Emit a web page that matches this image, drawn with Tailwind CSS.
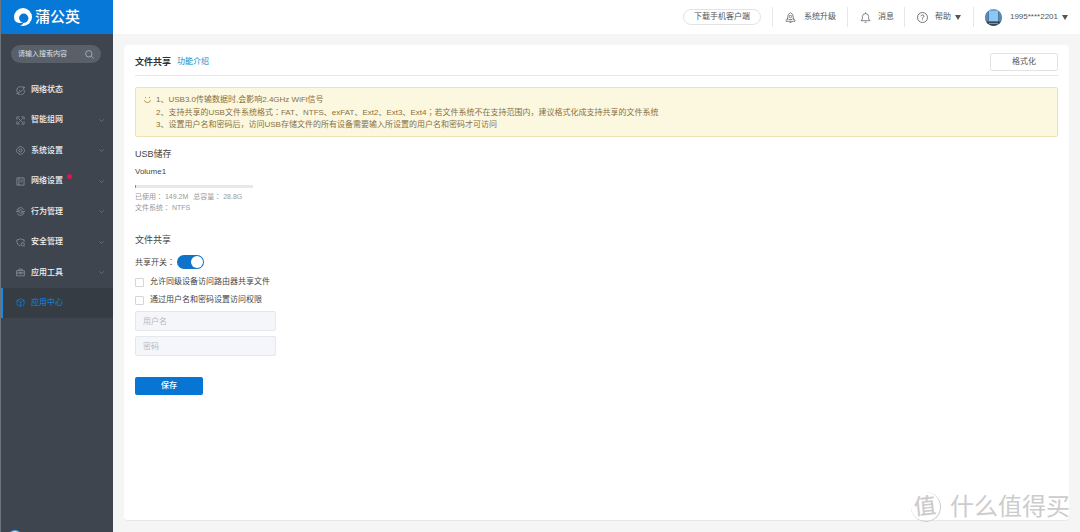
<!DOCTYPE html>
<html lang="zh-CN">
<head>
<meta charset="utf-8">
<meta name="viewport" content="width=device-width, initial-scale=1">
<title>蒲公英 - 文件共享</title>
<script src="https://cdn.jsdelivr.net/npm/@tailwindcss/browser@4"></script>
</head>
<body class="flex h-screen overflow-hidden bg-[#f5f5f5] font-['Liberation_Sans','Noto_Sans_CJK_SC',sans-serif] text-[8px] leading-3 text-[#555]">

<aside class="relative flex w-[113px] shrink-0 flex-col overflow-hidden border-l border-[#6d747c] bg-[#3e454e]">
  <a href="#" class="-ml-px flex h-[34px] shrink-0 items-center gap-[3px] bg-[#0578d8] pl-[14px] text-[15px] leading-5 font-medium text-white">
    <svg class="size-[18px]" viewBox="0 0 18 18"><circle cx="9" cy="9" r="9" fill="#fff"/><circle cx="9.700" cy="10.300" r="4.700" fill="#0578d8"/><path d="M0 12.500Q2.500 15.500 7 14.600L9.500 15Q8.500 17 5 18H0Z" fill="#0578d8"/><path d="M.5 11.500Q3 15.200 8.500 14.900Q5.300 13.800 5 10L2 8Z" fill="#fff"/></svg>
    <span>蒲公英</span>
  </a>
  <form class="mt-[11px] ml-[10px] flex h-[18px] w-[90px] shrink-0 items-center rounded-full bg-[#59606a] pr-[7px] pl-[7px]">
    <input type="search" aria-label="搜索" placeholder="请输入搜索内容" class="w-0 flex-1 bg-transparent text-[7px] text-white outline-none placeholder:text-[#dde0e3]">
    <button type="button" aria-label="搜索"><svg class="size-[9px]" viewBox="0 0 9 9" fill="none" stroke="#b4b9be" stroke-width=".8"><circle cx="3.800" cy="3.800" r="3.200"/><path d="M6.200 6.200L8.500 8.500"/></svg></button>
  </form>
  <nav class="mt-3 flex h-[243px] shrink-0 flex-col justify-between font-medium text-[#f0f1f2] [&_a]:flex [&_a]:h-[30px] [&_a]:items-center [&_a]:gap-[6px] [&_a]:pr-[9px] [&_a]:pl-[15px] [&_.i]:size-[9px] [&_.i]:fill-none [&_.i]:stroke-[#959ba2] [&_.c]:ml-auto [&_.c]:h-[3px] [&_.c]:w-[5px] [&_.c]:fill-none [&_.c]:stroke-[#757c84]">
    <a href="#"><svg class="i" viewBox="0 0 10 10" stroke-width=".8"><path d="M1 3.500A4.200 4.200 0 0 1 7 1.300M9 4A4.200 4.200 0 0 1 1.200 7.500M.5 8.500C3 8.500 8 4.500 9.300 1.200M1 3.500Q.2 7 3 7.500M3.500 4.500L5 6"/><circle cx="8.500" cy="1.500" r=".8"/></svg><span>网络状态</span></a>
    <a href="#"><svg class="i" viewBox="0 0 10 10" stroke-width=".8"><path d="M1 4V1H4M6 1H9V4M9 6V9H6M4 9H1V6M2.500 2.500L7.500 7.500M7.500 2.500L5.800 4.200M4.200 5.800L2.500 7.500"/></svg><span>智能组网</span><svg class="c" viewBox="0 0 5 3" stroke-width=".7"><path d="M.3.3L2.500 2.500L4.700.3"/></svg></a>
    <a href="#"><svg class="i" viewBox="0 0 10 10" stroke-width=".8"><path d="M3.200 1.200Q5 .2 6.800 1.200L8.300 2.500Q9.500 4 9.400 5Q9.500 6.500 8.300 7.500L6.800 8.800Q5 9.800 3.200 8.800L1.700 7.500Q.5 6.500.6 5Q.5 4 1.700 2.500Z"/><circle cx="5" cy="5" r="1.700"/></svg><span>系统设置</span><svg class="c" viewBox="0 0 5 3" stroke-width=".7"><path d="M.3.3L2.500 2.500L4.700.3"/></svg></a>
    <a href="#"><svg class="i" viewBox="0 0 10 10" stroke-width=".8"><path d="M1 1H9V9H1ZM3.300 1V9M5 3.500H7.500M5 5.500H7.500"/></svg><span class="relative">网络设置<i class="absolute -top-px -right-[9px] size-[5px] rounded-full bg-[#e3124d]"></i></span><svg class="c" viewBox="0 0 5 3" stroke-width=".7"><path d="M.3.3L2.500 2.500L4.700.3"/></svg></a>
    <a href="#"><svg class="i" viewBox="0 0 10 10" stroke-width=".8"><path d="M1.200 3A4.300 4.300 0 0 1 8.800 3M8.800 7A4.300 4.300 0 0 1 1.200 7M0 5H3M7 5H10M1 3.300H3.500M6.500 6.700H9"/><circle cx="5" cy="5" r="1.800"/></svg><span>行为管理</span><svg class="c" viewBox="0 0 5 3" stroke-width=".7"><path d="M.3.3L2.500 2.500L4.700.3"/></svg></a>
    <a href="#"><svg class="i" viewBox="0 0 10 10" stroke-width=".8"><path d="M5 9Q1 7.500 1 4.500V2Q3.500 2 5 .8Q6.500 2 9 2V4.500"/><circle cx="7.500" cy="7" r="1.800"/><path d="M8.800 8.300L9.700 9.200"/></svg><span>安全管理</span><svg class="c" viewBox="0 0 5 3" stroke-width=".7"><path d="M.3.3L2.500 2.500L4.700.3"/></svg></a>
    <a href="#"><svg class="i" viewBox="0 0 10 10" stroke-width=".8"><path d="M.7 3H9.300V8.700H.7ZM3.200 3V1.300H6.800V3M.7 5.500H4M6 5.500H9.300M4 4.800H6V6.300H4Z"/></svg><span>应用工具</span><svg class="c" viewBox="0 0 5 3" stroke-width=".7"><path d="M.3.3L2.500 2.500L4.700.3"/></svg></a>
    <a href="#" aria-current="page" class="-ml-px border-l-3 border-[#1989e6] bg-[#363c44] pl-[13px]! text-[#1678cc]"><svg class="i stroke-[#1678cc]!" viewBox="0 0 10 10" stroke-width=".9"><path d="M5 .8L9 2.600V7.200L5 9.300L1 7.200V2.600ZM1 2.600L5 4.600L9 2.600M5 4.600V9.300"/></svg><span>应用中心</span></a>
  </nav>
  <div class="absolute -bottom-[14px] left-[6px] size-4 rounded-full border border-[#3f98dc] bg-[#d4e5ef]"></div>
</aside>

<div class="flex min-w-0 flex-1 flex-col">
  <header class="flex h-[34px] shrink-0 items-center justify-end bg-white pr-3">
    <button class="mr-[11px] h-4 w-[78px] rounded-full border border-[#e3e3e3]">下载手机客户端</button>
    <a href="#" class="flex h-5 items-center gap-2 border-l border-[#e6e6e6] pr-[11px] pl-3"><svg class="size-[11px]" viewBox="0 0 11 11" fill="none" stroke="#666" stroke-width=".8"><path d="M2.800 8V4.200Q3 1.800 5.500.7Q8 1.800 8.200 4.200V8M2.800 6L1 8.500V9.300H10V8.500L8.200 6M4 7.500H7M4.500 10.400H6.500"/><circle cx="5.500" cy="4.500" r="1.200"/></svg>系统升级</a>
    <a href="#" class="flex h-5 items-center gap-[7px] border-l border-[#e6e6e6] pr-[10px] pl-3"><svg class="size-[11px]" viewBox="0 0 11 11" fill="none" stroke="#666" stroke-width=".8"><path d="M1 8.700H10L8.600 7V4.500Q8.400 1.700 5.500 1.500Q2.600 1.700 2.400 4.500V7ZM5.500.4V1.500M4.500 10.300H6.500"/></svg>消息</a>
    <button class="flex h-5 items-center gap-[7px] border-l border-[#e6e6e6] pr-3 pl-3"><svg class="size-[11px]" viewBox="0 0 11 11" fill="none" stroke="#555" stroke-width=".8"><circle cx="5.500" cy="5.500" r="5"/><path d="M4 4.300Q4.100 2.900 5.500 2.900Q7 3 7 4.300Q6.900 5.100 5.500 5.800V6.700M5.500 7.500V8.300"/></svg><span>帮助</span><svg class="-ml-[3px] h-[5px] w-[6px]" viewBox="0 0 6 5"><path d="M0 0H6L3 5Z" fill="#555"/></svg></button>
    <button class="flex h-5 items-center border-l border-[#e6e6e6] pl-[11px]"><svg class="mr-2 size-[17px]" viewBox="0 0 17 17"><defs><clipPath id="avatar"><circle cx="8.500" cy="8.500" r="8.500"/></clipPath></defs><g clip-path="url(#avatar)"><path d="M0 0H17V17H0Z" fill="#6ba4d2"/><path d="M4 2H13V12H4Z" fill="#8cc7f1"/><path d="M0 3H3V13H0ZM14 3H17V13H14Z" fill="#5888b4"/><path d="M3.500 2V13M13.500 2V13" stroke="#4a6f90" stroke-width=".8"/><path d="M1 12.500H16V17H1Z" fill="#354756"/><path d="M4 14.500H13" stroke="#8296a3"/></g></svg><span>1995****2201</span><svg class="ml-[4px] h-[5px] w-[6px]" viewBox="0 0 6 5"><path d="M0 0H6L3 5Z" fill="#555"/></svg></button>
  </header>

  <main class="m-[11px] flex-1 rounded-sm border-b border-[#e8e8e8] bg-white px-[11px]">
    <div class="flex h-[31px] items-center gap-[6px] border-b border-[#e6e6e6] pt-[3px]">
      <h1 class="text-[9px] font-bold text-[#333]">文件共享</h1>
      <a href="#" class="text-[#1a7fb8]">功能介绍</a>
      <button class="ml-auto h-[18px] w-[68px] rounded-xs border border-[#e3e3e3]">格式化</button>
    </div>

    <div class="mt-[11px] flex h-[50px] items-center gap-[5px] rounded-xs border border-[#eee3b0] bg-[#fcf8e0] px-2 text-[#89703f]">
      <svg class="mb-6 h-2 w-[7px]" viewBox="0 0 7 8" fill="none" stroke="#a98f4c" stroke-width=".9"><path d="M1.500 1V2.200M5.500 1V2.200M.5 4.200Q.7 6.500 3.500 6.500Q6.300 6.500 6.500 4.200"/></svg>
      <div>
        <p>1、USB3.0传输数据时,会影响2.4GHz WiFi信号</p>
        <p>2、支持共享的USB文件系统格式<span class="font-['Noto_Sans_CJK_TC']" lang="zh-TW">：</span>FAT、NTFS、exFAT、Ext2、Ext3、Ext4<span class="font-['Noto_Sans_CJK_TC']" lang="zh-TW">；</span>若文件系统不在支持范围内，建议格式化成支持共享的文件系统</p>
        <p>3、设置用户名和密码后，访问USB存储文件的所有设备需要输入所设置的用户名和密码才可访问</p>
      </div>
    </div>

    <section class="mt-[11px]">
      <h2 class="text-[9px] text-[#444]">USB储存</h2>
      <p class="mt-[6px] text-[#444]">Volume1</p>
      <div class="mt-[7px] h-[3px] w-[118px] bg-[#e5e9ed]" role="progressbar" aria-label="已使用空间" aria-valuenow="1"><div class="h-full bg-[#5db45a]" style="width:1%"></div></div>
      <p class="mt-[3px] text-[7px] leading-[11px] text-[#999]">已使用<span class="font-['Noto_Sans_CJK_TC']" lang="zh-TW">：</span> 149.2M <span class="ml-[3px]">总容量<span class="font-['Noto_Sans_CJK_TC']" lang="zh-TW">：</span> 28.8G</span></p>
      <p class="text-[7px] leading-[11px] text-[#999]">文件系统<span class="font-['Noto_Sans_CJK_TC']" lang="zh-TW">：</span> NTFS</p>
    </section>

    <form class="mt-[21px] flex flex-col items-start text-[#444]">
      <h2 class="text-[9px]">文件共享</h2>
      <label class="mt-[9px] flex h-[14px] items-center gap-[2px]"><span>共享开关<span class="font-['Noto_Sans_CJK_TC']" lang="zh-TW">：</span></span><input type="checkbox" role="switch" checked class="h-[14px] w-[27px] appearance-none rounded-full bg-[#0f73c9] before:mt-px before:ml-[14px] before:block before:size-3 before:rounded-full before:bg-white"></label>
      <label class="mt-[7px] flex items-center gap-[6px]"><input type="checkbox" class="size-[9px] appearance-none rounded-[1px] border border-[#d3d6da] bg-white checked:bg-[#0f73c9]">允许同级设备访问路由器共享文件</label>
      <label class="mt-[6px] flex items-center gap-[6px]"><input type="checkbox" class="size-[9px] appearance-none rounded-[1px] border border-[#d3d6da] bg-white checked:bg-[#0f73c9]">通过用户名和密码设置访问权限</label>
      <input type="text" aria-label="用户名" placeholder="用户名" class="mt-[5px] h-5 w-[141px] rounded-xs border border-[#e4e7ed] bg-[#f4f6fa] px-[7px] placeholder:text-[#b5b9c0]">
      <input type="password" aria-label="密码" placeholder="密码" class="mt-[5px] h-5 w-[141px] rounded-xs border border-[#e4e7ed] bg-[#f4f6fa] px-[7px] placeholder:text-[#b5b9c0]">
      <button type="button" class="mt-[21px] h-[18px] w-[68px] rounded-xs bg-[#0675d4] font-medium text-white">保存</button>
    </form>
  </main>
</div>

<div class="pointer-events-none absolute right-[10px] bottom-[9px] flex items-center gap-[9px] text-[#ccc] [text-shadow:-1px_-1px_0_#fff]">
  <span class="flex size-[30px] items-center justify-center rounded-full border-r border-b border-[#ccc] text-[22px] leading-7 font-medium"><span class="-rotate-6">值</span></span>
  <span class="text-[24px] leading-8">什么值得买</span>
</div>
</body>
</html>
